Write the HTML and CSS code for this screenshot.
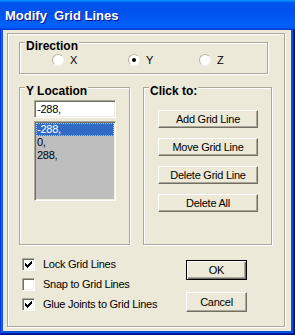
FILE: index.html
```html
<!DOCTYPE html>
<html lang="en">

<head>
    <meta charset="utf-8">
    <meta name="viewport" content="width=device-width, initial-scale=1.0">
    <title>Modify Grid Lines</title>
    <link rel="stylesheet" href="styles.css">
</head>

<body>

    <div class="window">
        <div class="titlebar">
            <span class="title">Modify&nbsp; Grid Lines</span>
        </div>

        <div class="client">
            <div class="frame">

                <div class="group direction">
                    <span class="caption">Direction</span>
                    <div class="radios">
                        <label class="radio opt-x"><span class="dot"></span>X</label>
                        <label class="radio opt-y"><span class="dot checked"></span>Y</label>
                        <label class="radio opt-z"><span class="dot"></span>Z</label>
                    </div>
                </div>

                <div class="groups">
                    <div class="group location">
                        <span class="caption">Y Location</span>
                        <div class="textbox">-288,</div>
                        <ul class="listbox">
                            <li class="selected">-288,</li>
                            <li>0,</li>
                            <li>288,</li>
                        </ul>
                    </div>

                    <div class="group clickto">
                        <span class="caption">Click to:</span>
                        <button class="btn">Add Grid Line</button>
                        <button class="btn">Move Grid Line</button>
                        <button class="btn">Delete Grid Line</button>
                        <button class="btn">Delete All</button>
                    </div>
                </div>

                <div class="bottom">
                    <div class="checks">
                        <label class="check">
                            <span class="box"><svg width="7" height="7" viewBox="0 0 7 7"><path d="M0 2h1v1h1v1h1v-1h1v-1h1v-1h1v-1h1v3h-1v1h-1v1h-1v1h-1v1h-1v-1h-1v-1h-1z" fill="#000"/></svg></span>
                            Lock Grid Lines
                        </label>
                        <label class="check">
                            <span class="box"></span>
                            Snap to Grid Lines
                        </label>
                        <label class="check">
                            <span class="box"><svg width="7" height="7" viewBox="0 0 7 7"><path d="M0 2h1v1h1v1h1v-1h1v-1h1v-1h1v-1h1v3h-1v1h-1v1h-1v1h-1v1h-1v-1h-1v-1h-1z" fill="#000"/></svg></span>
                            Glue Joints to Grid Lines
                        </label>
                    </div>
                    <div class="actions">
                        <button class="btn ok">OK</button>
                        <button class="btn cancel">Cancel</button>
                    </div>
                </div>

            </div>
        </div>
    </div>

</body>

</html>
```

FILE: styles.css
```css
body {
    margin: 0;
    font-family: "Liberation Sans", Arial, sans-serif;
    font-size: 11px;
    letter-spacing: -0.25px;
    color: #000;
}

* {
    box-sizing: border-box;
}

.window {
    width: 295px;
    height: 335px;
    display: flex;
    flex-direction: column;
    background: #0855dd;
    box-shadow: inset -1px -1px #00138c, inset 1px 1px #0831d9, inset -2px -2px #001ea0, inset 2px 2px #166aee;
}

.titlebar {
    height: 30px;
    flex: none;
    display: flex;
    align-items: center;
    padding-left: 5px;
    background: linear-gradient(180deg, #0997ff, #0053ee 10%, #0050ee 40%, #0062f8 85%, #005bff 92%, #003dd7 97%, #003dd7);
}

.title {
    color: #fff;
    font-weight: bold;
    font-size: 13px;
    letter-spacing: 0;
    text-shadow: 1px 1px #0f1089;
    white-space: pre;
}

.client {
    flex: 1;
    margin: 0 4px 4px 3px;
    padding: 3px 0 0 4px;
    background: #ece9d8;
}

.frame {
    width: 278px;
    height: 294px;
    padding: 8px 0 0 11px;
    border: 1px solid #aca899;
    box-shadow: inset 1px 1px #fff, 1px 1px #fff;
}

.group {
    position: relative;
    border: 1px solid #aca899;
    box-shadow: inset 1px 1px #fff, 1px 1px #fff;
}

.caption {
    position: absolute;
    top: -4px;
    left: 5px;
    padding: 0 1px;
    background: #ece9d8;
    font-weight: bold;
    font-size: 12px;
    line-height: 14px;
    letter-spacing: 0;
}

.direction {
    width: 249px;
    height: 32px;
}

.radios {
    display: flex;
    padding: 11px 0 0 32px;
}

.radio {
    display: flex;
    align-items: center;
    gap: 6px;
    height: 12px;
}

.opt-x {
    width: 76px;
}

.opt-y {
    width: 71px;
}

.dot {
    position: relative;
    width: 12px;
    height: 12px;
    border-radius: 50%;
    background: #fff;
    border: 1px solid;
    border-color: #b9b5a5 #f4f3ee #f4f3ee #b9b5a5;
}

.dot.checked::after {
    content: "";
    position: absolute;
    left: 3px;
    top: 3px;
    width: 4px;
    height: 4px;
    border-radius: 50%;
    background: #000;
}

.groups {
    display: flex;
    gap: 13px;
    margin-top: 13px;
}

.location {
    width: 111px;
    height: 158px;
    padding: 12px 0 0 14px;
}

.textbox {
    width: 82px;
    height: 18px;
    padding: 1px 0 0 2px;
    line-height: 14px;
    background: #fff;
    border: 1px solid;
    border-color: #aca899 #fff #fff #aca899;
    box-shadow: inset 1px 1px #716f64, inset -1px -1px #f1efe2;
}

.listbox {
    list-style: none;
    margin: 3px 0 0 0;
    padding: 1px;
    width: 82px;
    height: 80px;
    background: #bebebe;
    border: 1px solid;
    border-color: #aca899 #fff #fff #aca899;
    box-shadow: inset 1px 1px #716f64, inset -1px -1px #f1efe2;
}

.listbox li {
    height: 13px;
    line-height: 13px;
    padding-left: 1px;
}

.listbox .selected {
    background: #316ac5;
    color: #fff;
    outline: 1px dotted #b8c8e8;
    outline-offset: -1px;
}

.clickto {
    width: 129px;
    height: 158px;
    display: flex;
    flex-direction: column;
    gap: 10px;
    padding: 22px 0 0 14px;
}

.btn {
    width: 100px;
    height: 18px;
    padding: 0;
    font-family: inherit;
    font-size: 11px;
    letter-spacing: -0.25px;
    color: #000;
    background: #ece9d8;
    border: 1px solid;
    border-color: #fff #716f64 #716f64 #fff;
    box-shadow: inset -1px -1px #aca899;
}

.bottom {
    display: flex;
    margin-top: 9px;
}

.checks {
    display: flex;
    flex-direction: column;
    width: 164px;
    margin-left: 3px;
}

.check {
    height: 20px;
    display: flex;
    align-items: center;
    gap: 8px;
}

.box {
    width: 13px;
    height: 13px;
    display: flex;
    align-items: center;
    justify-content: center;
    background: #fff;
    border: 1px solid;
    border-color: #aca899 #fff #fff #aca899;
    box-shadow: inset 1px 1px #716f64, inset -1px -1px #f1efe2;
}

.actions {
    display: flex;
    flex-direction: column;
    gap: 12px;
    padding-top: 6px;
}

.actions .btn {
    width: 61px;
    height: 20px;
}

.actions .ok {
    border: 1px solid #000;
    box-shadow: inset 1px 1px #fff, inset -1px -1px #716f64, inset -2px -2px #aca899;
}
```
